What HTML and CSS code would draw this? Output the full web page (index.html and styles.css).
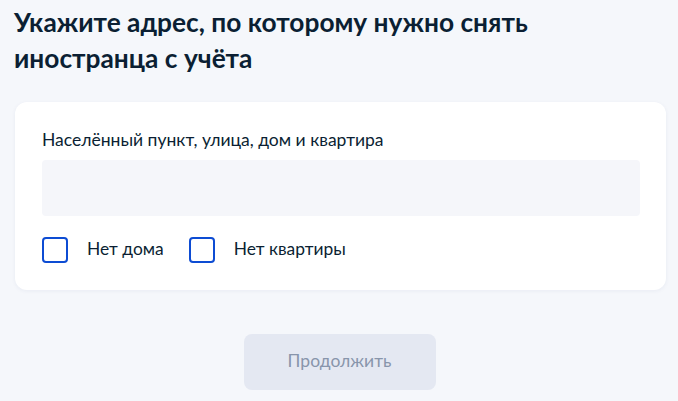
FILE: index.html
```html
<!DOCTYPE html>
<html lang="ru">
<head>
<meta charset="utf-8">
<link rel="stylesheet" href="styles.css">
</head>
<body>
<main class="page">
  <h1 class="title">Укажите адрес, по которому нужно снять иностранца с учёта</h1>
  <section class="card">
    <label class="label" for="addr">Населённый пункт, улица, дом и квартира</label>
    <input class="input" id="addr" type="text">
    <div class="checks">
      <label class="check"><span class="box"></span><span class="check-text">Нет дома</span></label>
      <label class="check"><span class="box"></span><span class="check-text">Нет квартиры</span></label>
    </div>
  </section>
  <div class="actions">
    <button class="btn" type="button" disabled>Продолжить</button>
  </div>
</main>
</body>
</html>
```
FILE: styles.css
```css
html, body {
  margin: 0;
  padding: 0;
}
body {
  background: #f5f7fb;
  font-family: Lato, "Noto Sans", sans-serif;
  color: #0b1f33;
  width: 678px;
  height: 401px;
  overflow: hidden;
}
.page {
  padding: 4px 12px 0 15px;
}
.title {
  margin: 0 0 0 -1px;
  font-size: 26.3px;
  line-height: 36px;
  font-weight: 700;
  width: 600px;
}
.card {
  margin-top: 26px;
  background: #fff;
  border-radius: 12px;
  box-shadow: 0 1px 4px rgba(26, 59, 120, 0.06);
  padding: 26px 26px 27px 27px;
  display: flex;
  flex-direction: column;
}
.label {
  font-size: 17.5px;
  line-height: 24px;
  color: #0b1f33;
}
.input {
  margin-top: 8px;
  height: 56px;
  border: none;
  border-radius: 4px;
  background: #f5f6fa;
  outline: none;
  box-sizing: border-box;
}
.checks {
  display: flex;
  gap: 25px;
  margin-top: 21px;
}
.check {
  display: flex;
  align-items: center;
  gap: 19px;
  font-size: 17.4px;
  line-height: 24px;
}
.check-text {
  padding-bottom: 2px;
}
.box {
  width: 26px;
  height: 26px;
  box-sizing: border-box;
  border: 2px solid #0d4cd3;
  border-radius: 4px;
  background: #fff;
}
.actions {
  display: flex;
  justify-content: center;
  margin-top: 44px;
  padding-right: 2px;
}
.btn {
  width: 192px;
  height: 56px;
  padding: 0 0 3px;
  border: none;
  border-radius: 8px;
  background: #e4e8f2;
  color: #8895ab;
  font-family: Lato, "Noto Sans", sans-serif;
  font-size: 17.5px;
}
```
